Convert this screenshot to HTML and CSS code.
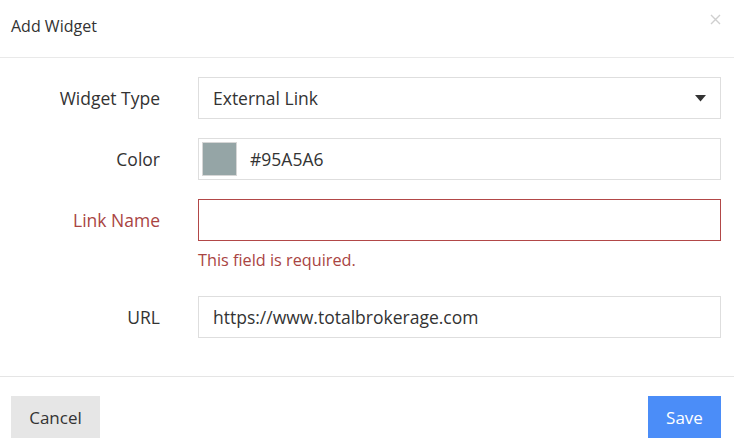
FILE: index.html
```html
<!DOCTYPE html>
<html>
<head>
<meta charset="utf-8">
<link rel="stylesheet" href="styles.css">
</head>
<body>
<div class="modal">
  <div class="modal-header">
    <h4 class="modal-title">Add Widget</h4>
    <button class="close" aria-label="Close">
      <svg width="11" height="11" viewBox="0 0 11 11"><path d="M1 1L10 10M10 1L1 10" stroke="#cfcfcf" stroke-width="1.4" fill="none"/></svg>
    </button>
  </div>
  <div class="modal-body">
    <div class="form-row">
      <label class="label">Widget Type</label>
      <div class="field">
        <div class="input select">
          <span>External Link</span>
          <svg class="caret" width="11" height="7" viewBox="0 0 11 7"><path d="M0 0H11L5.5 6.5Z" fill="#333"/></svg>
        </div>
      </div>
    </div>
    <div class="form-row">
      <label class="label">Color</label>
      <div class="field">
        <div class="input color-input">
          <span class="swatch"></span>
          <span>#95A5A6</span>
        </div>
      </div>
    </div>
    <div class="form-row has-error">
      <label class="label">Link Name</label>
      <div class="field">
        <div class="input"></div>
        <div class="help-block">This field is required.</div>
      </div>
    </div>
    <div class="form-row">
      <label class="label">URL</label>
      <div class="field">
        <div class="input">https://www.totalbrokerage.com</div>
      </div>
    </div>
  </div>
  <div class="modal-footer">
    <button class="btn btn-default">Cancel</button>
    <button class="btn btn-primary">Save</button>
  </div>
</div>
</body>
</html>
```

FILE: styles.css
```css
* { box-sizing: border-box; }
html, body {
  margin: 0;
  padding: 0;
  background: #fff;
}
body {
  font-family: "Open Sans", "Liberation Sans", sans-serif;
  font-size: 17.5px;
  color: #333;
}
.modal {
  width: 734px;
}
.modal-header {
  height: 58px;
  border-bottom: 1px solid #e9e9e9;
  display: flex;
  justify-content: space-between;
  align-items: flex-start;
  padding: 14px 13px 0 11px;
}
.modal-title {
  margin: 0;
  font-size: 16px;
  font-weight: normal;
  line-height: 24px;
  color: #333;
}
.close {
  border: 0;
  background: none;
  padding: 0;
  width: 11px;
  height: 11px;
  display: block;
}
.close svg { display: block; }
.modal-body {
  padding: 19px 13px 38px 0;
  display: flex;
  flex-direction: column;
  gap: 19px;
}
.form-row {
  display: grid;
  grid-template-columns: 160px 1fr;
  column-gap: 38px;
  align-items: start;
}
.label {
  text-align: right;
  line-height: 42px;
  height: 42px;
}
.input {
  height: 42px;
  border: 1px solid #dedede;
  padding: 0 14px;
  display: flex;
  align-items: center;
  line-height: 24px;
  color: #333;
}
.select {
  justify-content: space-between;
}
.caret { display: block; margin-top: 1px; }
.color-input {
  padding: 3px 3px;
  gap: 13px;
}
.swatch {
  width: 35px;
  height: 34px;
  background: #95a5a6;
  border: 1px solid #d6d6d6;
  display: block;
}
.has-error .label { color: #a94442; }
.has-error .input { border-color: #b24747; }
.help-block {
  color: #a94442;
  font-size: 16.25px;
  line-height: 24px;
  margin-top: 7px;
  margin-bottom: 5px;
}
.modal-footer {
  border-top: 1px solid #e5e5e5;
  padding: 19px 13px 0 11px;
  display: flex;
  justify-content: space-between;
}
.btn {
  font-family: "Open Sans", "Liberation Sans", sans-serif;
  font-size: 17px;
  border: 0;
  height: 42px;
  padding: 0;
  cursor: pointer;
}
.btn-default {
  background: #e6e6e6;
  color: #333;
  width: 89px;
}
.btn-primary {
  background: #4b8df8;
  color: #fff;
  width: 73px;
}
```
